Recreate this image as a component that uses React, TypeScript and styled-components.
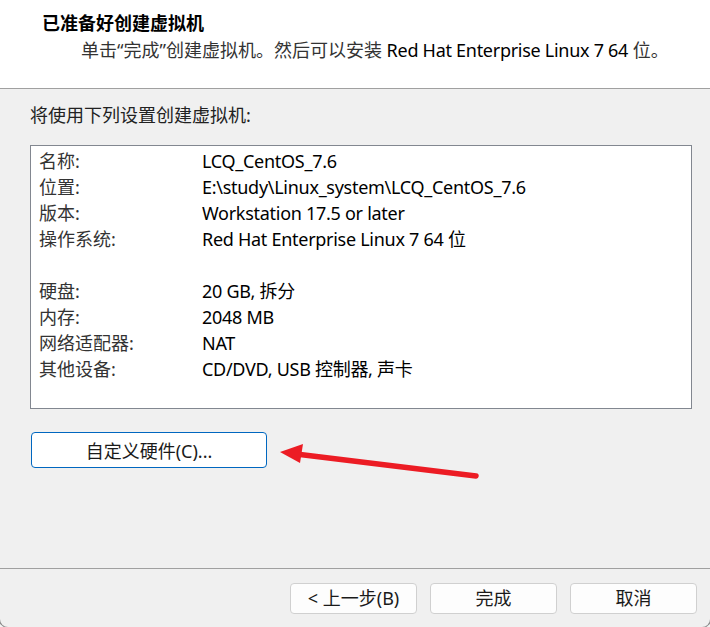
import styled, { createGlobalStyle } from "styled-components";

type Setting = {
  label: string;
  value: string;
};

const settings: (Setting | null)[] = [
  { label: "名称:", value: "LCQ_CentOS_7.6" },
  { label: "位置:", value: "E:\\study\\Linux_system\\LCQ_CentOS_7.6" },
  { label: "版本:", value: "Workstation 17.5 or later" },
  { label: "操作系统:", value: "Red Hat Enterprise Linux 7 64 位" },
  null,
  { label: "硬盘:", value: "20 GB, 拆分" },
  { label: "内存:", value: "2048 MB" },
  { label: "网络适配器:", value: "NAT" },
  { label: "其他设备:", value: "CD/DVD, USB 控制器, 声卡" },
];

const GlobalStyle = createGlobalStyle`
  html, body {
    margin: 0;
    padding: 0;
    background: #f3f3f3;
  }
  body {
    font-family: "Noto Sans", "Noto Sans CJK SC", sans-serif;
    font-size: 18px;
    color: #1a1a1a;
  }
`;

export default function App() {
  return (
    <>
      <GlobalStyle />
      <Window>
        <Header>
          <Title>已准备好创建虚拟机</Title>
          <Subtitle>
            单击“完成”创建虚拟机。然后可以安装 <Latin>Red Hat Enterprise Linux 7 64</Latin> 位。
          </Subtitle>
        </Header>

        <Body>
          <Prompt>将使用下列设置创建虚拟机:</Prompt>
          <SummaryBox>
            {settings.map((s, i) =>
              s ? (
                <SummaryRow key={i}>
                  <Label>{s.label}</Label>
                  <Value>{s.value}</Value>
                </SummaryRow>
              ) : (
                <SummaryRow key={i} />
              )
            )}
          </SummaryBox>
          <CustomizeButton>自定义硬件(C)...</CustomizeButton>
        </Body>

        <Footer>
          <DialogButton>&lt; 上一步(B)</DialogButton>
          <DialogButton>完成</DialogButton>
          <DialogButton>取消</DialogButton>
        </Footer>

        <Arrow width="710" height="627" viewBox="0 0 710 627">
          <line
            x1="476"
            y1="476"
            x2="296"
            y2="454"
            stroke="#ec1c24"
            strokeWidth="5.5"
            strokeLinecap="round"
          />
          <polygon points="280,452 303,444 300,463" fill="#ec1c24" />
        </Arrow>
      </Window>
    </>
  );
}

const Window = styled.div`
  position: relative;
  display: flex;
  flex-direction: column;
  width: 710px;
  height: 627px;
  background: #f0f0f0;
  border-radius: 0 0 8px 8px;
  box-shadow: 0 0 0 1px #8c8c8c;
  overflow: hidden;
`;

const Header = styled.div`
  height: 89px;
  padding-top: 10px;
  box-sizing: border-box;
  background: #ffffff;
  border-bottom: 1px solid #a0a0a0;
`;

const Title = styled.div`
  padding-left: 42px;
  line-height: 26px;
  font-weight: 700;
  color: #000;
`;

const Subtitle = styled.div`
  margin-top: 1px;
  padding-left: 81px;
  line-height: 26px;
  color: #333;
  white-space: nowrap;
`;

const Latin = styled.span`
  color: #000;
  letter-spacing: -0.28px;
`;

const Body = styled.div`
  flex: 1;
  display: flex;
  flex-direction: column;
  align-items: flex-start;
  padding: 13px 18px 0 30px;
`;

const Prompt = styled.div`
  line-height: 26px;
  color: #222;
`;

const SummaryBox = styled.div`
  align-self: stretch;
  box-sizing: border-box;
  height: 264px;
  margin-top: 17px;
  padding: 2px 0 0 8px;
  background: #ffffff;
  border: 1px solid #828790;
`;

const SummaryRow = styled.div`
  display: grid;
  grid-template-columns: 163px 1fr;
  height: 26px;
  line-height: 26px;
  white-space: nowrap;
`;

const Label = styled.span`
  color: #333;
`;

const Value = styled.span`
  color: #000;
  letter-spacing: -0.28px;
`;

const CustomizeButton = styled.button`
  margin-top: 23px;
  margin-left: 1px;
  width: 236px;
  height: 36px;
  padding: 0;
  font: inherit;
  color: #1a1a1a;
  background: #ffffff;
  border: 1px solid #0067c0;
  border-radius: 4px;
`;

const Footer = styled.div`
  display: flex;
  justify-content: flex-end;
  gap: 13px;
  padding: 14px 13px 13px;
  border-top: 1px solid #a0a0a0;
`;

const DialogButton = styled.button`
  width: 127px;
  height: 31px;
  padding: 0;
  font: inherit;
  line-height: 29px;
  color: #1a1a1a;
  background: #fdfdfd;
  border: 1px solid #d0d0d0;
  border-radius: 4px;
`;

const Arrow = styled.svg`
  position: absolute;
  left: 0;
  top: 0;
  pointer-events: none;
`;
